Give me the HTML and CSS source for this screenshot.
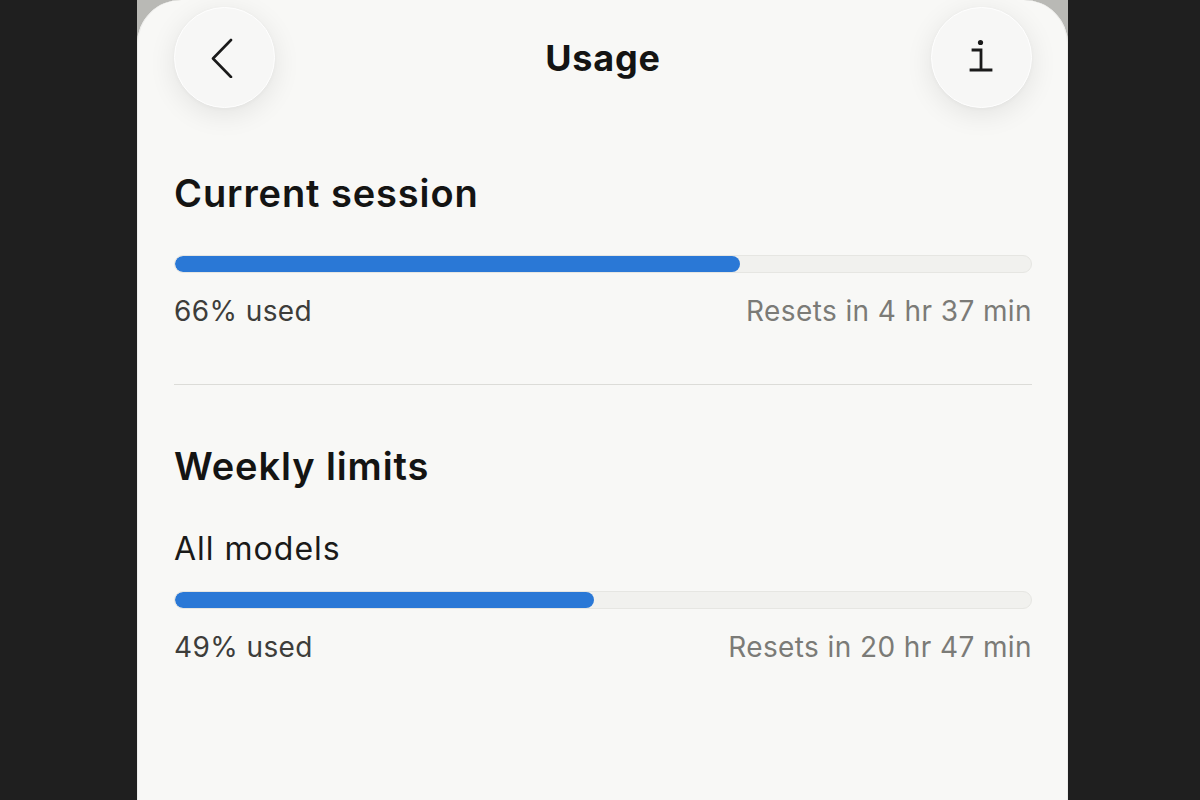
FILE: index.html
```html
<!DOCTYPE html>
<html lang="en">
<head>
<meta charset="utf-8">
<title>Usage</title>
<link rel="stylesheet" href="styles.css">
</head>
<body>
<div class="frame">
  <div class="screen">
    <header class="topbar">
      <button class="round-btn" aria-label="Back">
        <svg width="40" height="40" viewBox="0 0 40 40"><path d="M26 2 L8 20.5 L26 39" fill="none" stroke="#1a1a1a" stroke-width="2.6" stroke-linecap="round" stroke-linejoin="round"/></svg>
      </button>
      <h1 class="title">Usage</h1>
      <button class="round-btn" aria-label="Info">
        <svg width="40" height="40" viewBox="0 0 40 40"><circle cx="19.5" cy="4.5" r="2.6" fill="#1a1a1a"/><path d="M12 12 H20 V32 M10 32 H30" fill="none" stroke="#1a1a1a" stroke-width="2.8" stroke-linecap="square"/></svg>
      </button>
    </header>

    <section class="section">
      <h2 class="heading">Current session</h2>
      <div class="bar bar-first"><div class="fill" style="width:66%"></div></div>
      <div class="meta"><span class="used">66% used</span><span class="reset">Resets in 4 hr 37 min</span></div>
    </section>

    <hr class="divider">

    <section class="section">
      <h2 class="heading heading-second">Weekly limits</h2>
      <div class="label">All models</div>
      <div class="bar"><div class="fill" style="width:49%"></div></div>
      <div class="meta"><span class="used">49% used</span><span class="reset">Resets in 20 hr 47 min</span></div>
    </section>
  </div>
</div>
</body>
</html>
```

FILE: styles.css
```css
* { box-sizing: border-box; }
html, body { margin: 0; padding: 0; }
body {
  background: #1f1f1f;
  width: 1200px;
  height: 800px;
  overflow: hidden;
  font-family: Inter, "Noto Sans", "Liberation Sans", sans-serif;
}
.frame {
  margin-left: 137px;
  width: 931px;
  height: 800px;
  background: #b9b9b5;
}
.screen {
  width: 931px;
  height: 800px;
  background: #f8f8f6;
  border-radius: 44px 44px 0 0;
  padding: 7px 36px 0 37px;
  box-shadow: inset 1px 0 0 #ececea, inset -1px 0 0 #ececea;
}
.topbar {
  display: flex;
  align-items: center;
  justify-content: space-between;
  height: 101px;
}
.round-btn {
  width: 101px;
  height: 101px;
  border-radius: 50%;
  border: 1px solid #ffffff;
  background: #f7f7f6;
  box-shadow: 0 6px 28px rgba(0,0,0,0.09), 0 1px 4px rgba(0,0,0,0.03);
  display: flex;
  align-items: center;
  justify-content: center;
  padding: 0;
}
.title {
  margin: 0;
  font-size: 36px;
  font-weight: 700;
  color: #141413;
  letter-spacing: 0.8px;
  line-height: 40px;
}
.section { display: block; }
.heading {
  margin: 63px 0 0;
  font-size: 38px;
  font-weight: 600;
  line-height: 44px;
  color: #141413;
  letter-spacing: 0.9px;
}
.heading-second { margin-top: 59px; }
.bar {
  height: 18px;
  border-radius: 9px;
  background: #f1f1ee;
  border: 1px solid #e6e6e2;
  margin-top: 24px;
  overflow: hidden;
}
.bar-first { margin-top: 40px; }
.fill {
  height: 100%;
  background: #2a78d6;
  border-radius: 9px;
}
.meta {
  display: flex;
  justify-content: space-between;
  align-items: center;
  margin-top: 21px;
  line-height: 34px;
  font-size: 28px;
  letter-spacing: 0.4px;
}
.used { color: #3d3d3a; }
.reset { color: #7b7b77; }
.divider {
  border: 0;
  height: 1px;
  background: #dcdcd8;
  margin: 56px 0 0;
}
.label {
  margin-top: 43px;
  font-size: 32px;
  line-height: 36px;
  color: #1a1a19;
  letter-spacing: 1px;
}
```
